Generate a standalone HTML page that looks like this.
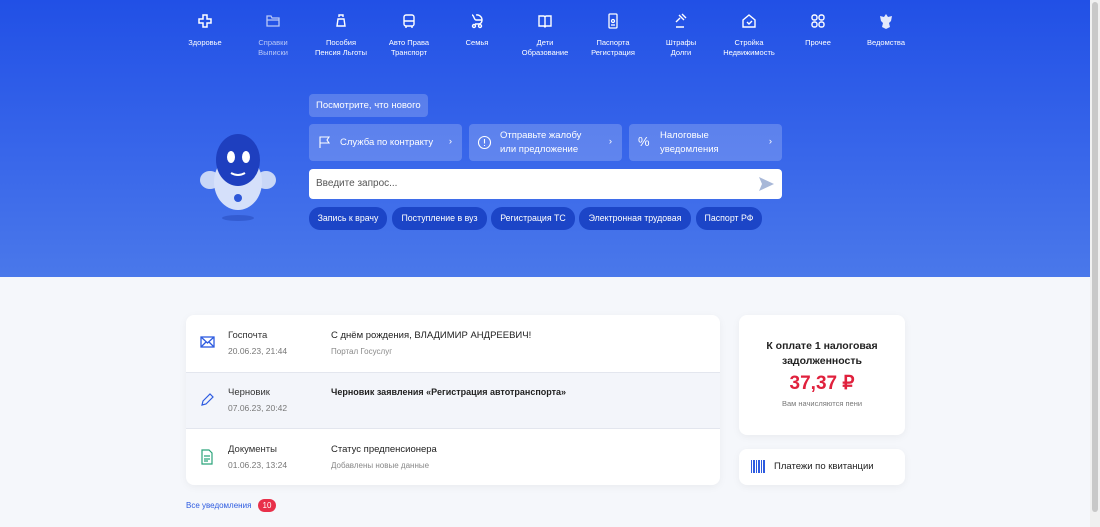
<!DOCTYPE html><html><head><meta charset="utf-8"><style>
*{box-sizing:border-box;margin:0;padding:0}
body{width:1100px;height:527px;overflow:hidden;font-family:"Liberation Sans",sans-serif;background:#f5f7fb;position:relative}
.hdr{position:absolute;left:0;top:0;width:1090px;height:277px;background:linear-gradient(180deg,#2150e6 0%,#3a68ea 60%,#4a78ea 100%)}
.sb{position:absolute;left:1090px;top:0;width:10px;height:527px;background:#f0f0f0}
.sb div{position:absolute;left:2px;top:2px;width:6px;height:510px;background:#c8c8c8;border-radius:3px}
.nav{position:absolute;top:12px;width:68px;text-align:center;color:#fff;font-size:7.5px;line-height:10px;white-space:nowrap}
.nav svg{display:block;margin:0 auto 8px;width:16px;height:18px}
.nav.dim{color:#b9c8f7}
.ab{position:absolute;color:#fff;font-size:9.5px;background:rgba(255,255,255,.2);border-radius:4px;white-space:nowrap}
.chip{position:absolute;top:207px;height:23px;line-height:23px;color:#fff;font-size:8.8px;background:#1c45c7;border-radius:11px;text-align:center;white-space:nowrap}
.card{position:absolute;background:#fff;border-radius:8px;box-shadow:0 2px 8px rgba(0,0,0,.05)}
.row{position:absolute;left:0;width:534px;height:57px}
.t1{position:absolute;left:42px;font-size:9.5px;color:#333}
.t2{position:absolute;left:42px;font-size:8.5px;color:#777}
.m1{position:absolute;left:145px;font-size:9.5px;color:#222}
.m2{position:absolute;left:145px;font-size:8px;color:#888}
</style></head><body>
<div class="hdr">
<div class="nav" style="left:171px"><svg viewBox="0 0 16 18" fill="none" stroke="#fff" stroke-width="1.5"><path d="M6 3h4v4h4v4h-4v4H6v-4H2V7h4z"/></svg>Здоровье</div>
<div class="nav dim" style="left:239px"><svg viewBox="0 0 16 18" fill="none" stroke="#b9c8f7" stroke-width="1.3"><path d="M2 4h4l1 2h7v8H2z M2 8h12"/></svg>Справки<br>Выписки</div>
<div class="nav" style="left:307px"><svg viewBox="0 0 16 18" fill="none" stroke="#fff" stroke-width="1.4"><path d="M6 5V3h4v2 M4 14l1-7h6l1 7z"/></svg>Пособия<br>Пенсия Льготы</div>
<div class="nav" style="left:375px"><svg viewBox="0 0 16 18" fill="none" stroke="#fff" stroke-width="1.4"><rect x="3" y="3" width="10" height="11" rx="2"/><path d="M3 9h10 M5 14v2 M11 14v2"/></svg>Авто Права<br>Транспорт</div>
<div class="nav" style="left:443px"><svg viewBox="0 0 16 18" fill="none" stroke="#fff" stroke-width="1.4"><path d="M3 3c2 0 2 5 4 5h6c0 3-2 4-4 4H6 M7 3a5 5 0 0 1 6 5"/><circle cx="5" cy="14" r="1.5"/><circle cx="11" cy="14" r="1.5"/></svg>Семья</div>
<div class="nav" style="left:511px"><svg viewBox="0 0 16 18" fill="none" stroke="#fff" stroke-width="1.4"><path d="M2 4h5l1 1 1-1h5v10H9l-1 1-1-1H2z M8 5v10"/></svg>Дети<br>Образование</div>
<div class="nav" style="left:579px"><svg viewBox="0 0 16 18" fill="none" stroke="#fff" stroke-width="1.3"><rect x="4" y="2" width="8" height="14" rx="1"/><circle cx="8" cy="9" r="1.5"/><path d="M6 13h4"/></svg>Паспорта<br>Регистрация</div>
<div class="nav" style="left:647px"><svg viewBox="0 0 16 18" fill="none" stroke="#fff" stroke-width="1.4"><path d="M6 3l5 5 M9 2l4 4 M7 6l-4 4 M3 15h8"/></svg>Штрафы<br>Долги</div>
<div class="nav" style="left:715px"><svg viewBox="0 0 16 18" fill="none" stroke="#fff" stroke-width="1.4"><path d="M2 8l6-5 6 5v7H2z M6 10l2 2 3-3"/></svg>Стройка<br>Недвижимость</div>
<div class="nav" style="left:784px"><svg viewBox="0 0 16 18" fill="none" stroke="#fff" stroke-width="1.4"><rect x="2" y="3" width="5" height="5" rx="2"/><rect x="9" y="3" width="5" height="5" rx="2"/><rect x="2" y="10" width="5" height="5" rx="2"/><rect x="9" y="10" width="5" height="5" rx="2"/></svg>Прочее</div>
<div class="nav" style="left:852px"><svg viewBox="0 0 16 18" fill="#e3e9fb"><path d="M8 2l2 3 4-1-1 5-2 2 1 4-4 2-4-2 1-4-2-2-1-5 4 1z"/></svg>Ведомства</div>

<div class="ab" style="left:309px;top:94px;width:119px;height:23px;line-height:23px;padding-left:7px">Посмотрите, что нового</div>
<div class="ab" style="left:309px;top:124px;width:153px;height:37px">
<svg style="position:absolute;left:9px;top:11px" width="14" height="14" viewBox="0 0 14 14" fill="none" stroke="#fff" stroke-width="1.1"><path d="M2 13V2h9l-2 3 2 3H2"/></svg>
<span style="position:absolute;left:31px;top:13px">Служба по контракту</span><span style="position:absolute;right:10px;top:12px">›</span></div>
<div class="ab" style="left:469px;top:124px;width:153px;height:37px">
<svg style="position:absolute;left:8px;top:11px" width="15" height="15" viewBox="0 0 15 15" fill="none" stroke="#fff" stroke-width="1.1"><circle cx="7.5" cy="7.5" r="6"/><path d="M7.5 4v4.5 M7.5 10v1"/></svg>
<span style="position:absolute;left:31px;top:5px;line-height:14px">Отправьте жалобу<br>или предложение</span><span style="position:absolute;right:10px;top:12px">›</span></div>
<div class="ab" style="left:629px;top:124px;width:153px;height:37px">
<span style="position:absolute;left:9px;top:10px;font-size:13px">%</span>
<span style="position:absolute;left:31px;top:5px;line-height:14px">Налоговые<br>уведомления</span><span style="position:absolute;right:10px;top:12px">›</span></div>
<div style="position:absolute;left:309px;top:169px;width:473px;height:30px;background:#fff;border-radius:4px">
<span style="position:absolute;left:7px;top:9px;font-size:10px;color:#555">Введите запрос...</span>
<svg style="position:absolute;right:8px;top:8px" width="15" height="14" viewBox="0 0 15 14" fill="#a8b8d8"><path d="M0 0l15 7-15 7 3-7z"/></svg></div>
<div class="chip" style="left:309px;width:78px">Запись к врачу</div>
<div class="chip" style="left:392px;width:95px">Поступление в вуз</div>
<div class="chip" style="left:491px;width:84px">Регистрация ТС</div>
<div class="chip" style="left:579px;width:112px">Электронная трудовая</div>
<div class="chip" style="left:696px;width:66px">Паспорт РФ</div>

<svg style="position:absolute;left:198px;top:130px" width="80" height="95" viewBox="0 0 80 95">
<ellipse cx="40" cy="88" rx="16" ry="3" fill="#2a4fc0" opacity=".6"/>
<ellipse cx="12" cy="50" rx="10" ry="9" fill="#c9d7f7"/><ellipse cx="68" cy="50" rx="10" ry="9" fill="#c9d7f7"/>
<ellipse cx="40" cy="52" rx="24" ry="28" fill="#d5e0fa"/>
<ellipse cx="40" cy="30" rx="22" ry="26" fill="#1e3fbf"/>
<ellipse cx="33" cy="27" rx="4" ry="6" fill="#fff"/><ellipse cx="48" cy="27" rx="4" ry="6" fill="#fff"/>
<path d="M33 43q7 4 14 0" stroke="#fff" stroke-width="2" fill="none"/>
<circle cx="40" cy="68" r="4" fill="#2d57d8"/></svg>
</div>

<div class="card" style="left:186px;top:315px;width:534px;height:170px;overflow:hidden">
<div class="row" style="top:0">
<svg style="position:absolute;left:14px;top:21px" width="15" height="12" viewBox="0 0 15 12" fill="none" stroke="#2d5be0" stroke-width="1.3"><rect x="1" y="1" width="13" height="10"/><path d="M1 1l6.5 6 6.5-6 M1 11l5-5 M14 11l-5-5"/></svg>
<div class="t1" style="top:15px">Госпочта</div><div class="t2" style="top:31px">20.06.23, 21:44</div>
<div class="m1" style="top:15px">С днём рождения, ВЛАДИМИР АНДРЕЕВИЧ!</div><div class="m2" style="top:32px">Портал Госуслуг</div></div>
<div class="row" style="top:57px;background:#f3f5fa;border-top:1px solid #e3e6ee;border-bottom:1px solid #e3e6ee">
<svg style="position:absolute;left:14px;top:19px" width="14" height="15" viewBox="0 0 14 15" fill="none" stroke="#2d5be0" stroke-width="1.2"><path d="M2 13l1-4 7-7 3 3-7 7z"/></svg>
<div class="t1" style="top:14px">Черновик</div><div class="t2" style="top:30px">07.06.23, 20:42</div>
<div class="m1" style="top:14px;font-weight:bold;font-size:9px">Черновик заявления «Регистрация автотранспорта»</div></div>
<div class="row" style="top:114px">
<svg style="position:absolute;left:15px;top:20px" width="12" height="16" viewBox="0 0 12 16" fill="none" stroke="#2aa37a" stroke-width="1.2"><path d="M1 1h7l3 3v11H1z M3 7h6 M3 10h6 M3 12h4"/></svg>
<div class="t1" style="top:15px">Документы</div><div class="t2" style="top:31px">01.06.23, 13:24</div>
<div class="m1" style="top:15px">Статус предпенсионера</div><div class="m2" style="top:32px">Добавлены новые данные</div></div>
</div>
<div style="position:absolute;left:186px;top:501px;font-size:8px;color:#2d5be0;white-space:nowrap">Все уведомления</div>
<div style="position:absolute;left:258px;top:499px;width:18px;height:13px;border-radius:7px;background:#e8304a;color:#fff;font-size:8px;text-align:center;line-height:13px">10</div>

<div class="card" style="left:739px;top:315px;width:166px;height:120px;text-align:center">
<div style="position:absolute;top:24px;width:100%;font-size:10.5px;font-weight:bold;color:#222;line-height:15px">К оплате 1 налоговая<br>задолженность</div>
<div style="position:absolute;top:57px;width:100%;font-size:19px;font-weight:bold;color:#e0213d">37,37 ₽</div>
<div style="position:absolute;top:84px;width:100%;font-size:7.5px;color:#777">Вам начисляются пени</div></div>
<div class="card" style="left:739px;top:449px;width:166px;height:36px">
<svg style="position:absolute;left:12px;top:11px" width="14" height="13" viewBox="0 0 14 13" fill="#2d5be0"><rect x="0" y="0" width="1" height="13"/><rect x="2" y="0" width="2" height="13"/><rect x="5" y="0" width="1" height="13"/><rect x="7" y="0" width="2" height="13"/><rect x="10" y="0" width="1" height="13"/><rect x="12" y="0" width="2" height="13"/></svg>
<span style="position:absolute;left:35px;top:12px;font-size:9.5px;color:#222">Платежи по квитанции</span></div>
<div class="sb"><div></div></div>
</body></html>
